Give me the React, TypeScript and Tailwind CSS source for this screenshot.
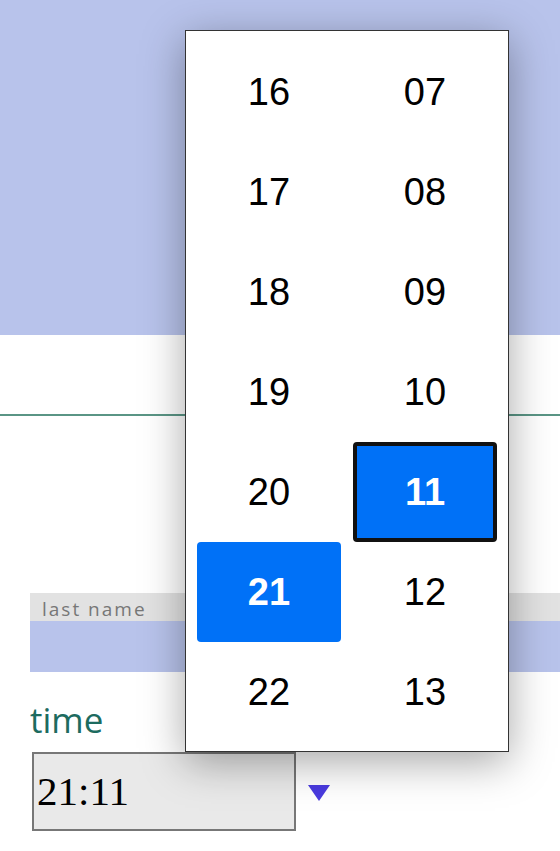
import { useState } from 'react'

const hours = ['16', '17', '18', '19', '20', '21', '22']
const minutes = ['07', '08', '09', '10', '11', '12', '13']

export default function App() {
  const [hour, setHour] = useState('21')
  const [minute, setMinute] = useState('11')

  return (
    <div className="relative w-[560px] h-[851px] overflow-hidden bg-white">
      {/* 상단 배경 */}
      <div className="h-[335px] bg-[#b8c3eb]" />
      <div className="h-[81px] border-b-2 border-[#5a9585]" />

      {/* last name 필드 */}
      <div className="mt-[177px] ml-[30px]">
        <div className="h-[28px] bg-[#e2e2e2] pl-[12px] pt-[6px] text-[19px] leading-[21px] tracking-[2px] text-[#777] overflow-hidden" style={{ fontFamily: '"Open Sans", sans-serif' }}>
          last name
        </div>
        <div className="h-[51px] bg-[#b8c3eb]" />
      </div>

      {/* time 필드 */}
      <div className="ml-[30px] mt-[28px] text-[35px] leading-[40px] text-[#1d6b5f]" style={{ fontFamily: '"Open Sans", sans-serif' }}>
        time
      </div>
      <div className="ml-[32px] mt-[12px] flex items-center gap-[12px]">
        <div className="w-[264px] h-[79px] border-2 border-[#777] bg-[#e9e9e9] flex items-center pl-[3px] text-[41px] text-black" style={{ fontFamily: '"Liberation Serif", serif' }}>
          {hour}:{minute}
        </div>
        <svg width="22" height="16" viewBox="0 0 22 16" className="mt-[2px]">
          <path d="M0 0 L22 0 L11 16 Z" fill="#4a3be0" />
        </svg>
      </div>

      {/* 시간 선택 팝업 */}
      <div className="absolute left-[185px] top-[30px] w-[324px] h-[722px] bg-white border border-[#333] shadow-[0_10px_40px_rgba(0,0,0,0.35)] p-[11px] grid grid-cols-2 gap-x-[12px]" style={{ fontFamily: '"Liberation Sans", Arial, sans-serif' }}>
        <div className="flex flex-col">
          {hours.map((h) => (
            <button
              key={h}
              onClick={() => setHour(h)}
              className={`h-[100px] rounded-[4px] flex items-center justify-center text-[38px] ${h === hour ? 'bg-[#0071f7] text-white font-bold' : 'text-black'}`}
            >
              {h}
            </button>
          ))}
        </div>
        <div className="flex flex-col">
          {minutes.map((m) => (
            <button
              key={m}
              onClick={() => setMinute(m)}
              className={`h-[100px] rounded-[4px] flex items-center justify-center text-[38px] ${m === minute ? 'bg-[#0071f7] text-white font-bold border-4 border-[#111]' : 'text-black'}`}
            >
              {m}
            </button>
          ))}
        </div>
      </div>
    </div>
  )
}
